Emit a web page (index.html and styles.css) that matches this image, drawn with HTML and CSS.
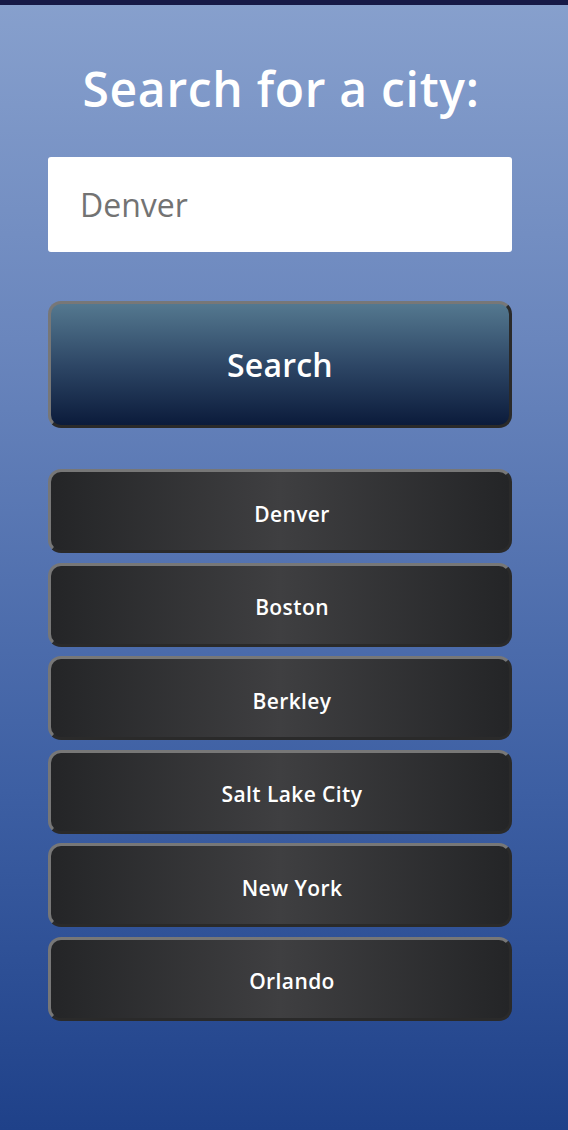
FILE: index.html
```html
<!DOCTYPE html>
<html>
<head>
<meta charset="utf-8">
<link rel="stylesheet" href="styles.css">
</head>
<body>
<div class="topbar"></div>
<main class="page">
  <h1 class="title">Search for a city:</h1>
  <div class="input">Denver</div>
  <button class="search">Search</button>
  <div class="cities">
    <button class="city">Denver</button>
    <button class="city">Boston</button>
    <button class="city">Berkley</button>
    <button class="city">Salt Lake City</button>
    <button class="city">New York</button>
    <button class="city">Orlando</button>
  </div>
</main>
</body>
</html>
```
FILE: styles.css
```css
html, body {
  margin: 0;
  height: 100%;
}
body {
  font-family: "Open Sans", "Lato", sans-serif;
  background: linear-gradient(to bottom, #87a0cd 0%, #6a86bd 30%, #3d5fa3 70%, #1f4189 100%);
  min-height: 1130px;
}
.topbar {
  height: 5px;
  background: #171a47;
}
.page {
  padding: 0 56px 0 48px;
  display: flex;
  flex-direction: column;
}
.title {
  margin: 54px 0 0 0;
  height: 98px;
  text-align: center;
  color: #fff;
  font-size: 48px;
  font-weight: 600;
  line-height: 60px;
  letter-spacing: 0.7px;
  padding-left: 2px;
}
.input {
  height: 95px;
  background: #fff;
  border-radius: 3px;
  box-sizing: border-box;
  padding-left: 32px;
  display: flex;
  align-items: center;
  font-size: 32px;
  color: #737373;
}
.search {
  margin-top: 49px;
  height: 127px;
  box-sizing: border-box;
  border: 3px solid;
  border-color: #777 #2a2a2a #2a2a2a #777;
  border-radius: 13px;
  background: linear-gradient(to bottom, #54788f 0%, #2e4766 50%, #0b1b3b 100%);
  color: #fff;
  font-family: inherit;
  font-size: 32px;
  font-weight: 600;
  letter-spacing: 0.2px;
  padding: 0;
}
.cities {
  margin-top: 41px;
  display: flex;
  flex-direction: column;
  gap: 9.6px;
}
.city {
  height: 84px;
  box-sizing: border-box;
  border: 3px solid;
  border-color: #777 #2a2a2a #2a2a2a #777;
  border-radius: 13px;
  background: linear-gradient(to right, #242527 0%, #3f3f41 50%, #242527 100%);
  color: #fff;
  font-family: inherit;
  font-size: 21px;
  font-weight: 600;
  letter-spacing: 0.4px;
  padding: 5px 0 0 24px;
}
```
